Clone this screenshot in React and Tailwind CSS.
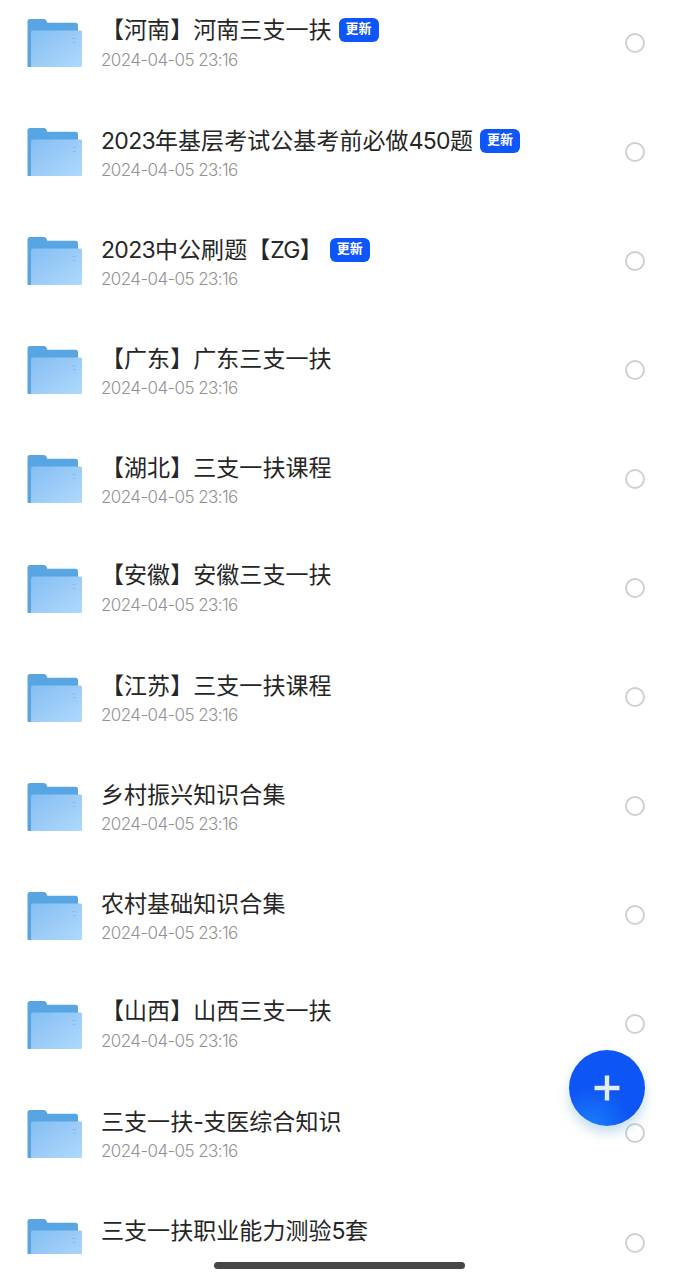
const files = [
  { title: "【河南】河南三支一扶", date: "2024-04-05 23:16", updated: true, raised: true },
  { title: "2023年基层考试公基考前必做450题", date: "2024-04-05 23:16", updated: true },
  { title: "2023中公刷题【ZG】", date: "2024-04-05 23:16", updated: true },
  { title: "【广东】广东三支一扶", date: "2024-04-05 23:16" },
  { title: "【湖北】三支一扶课程", date: "2024-04-05 23:16" },
  { title: "【安徽】安徽三支一扶", date: "2024-04-05 23:16", raised: true },
  { title: "【江苏】三支一扶课程", date: "2024-04-05 23:16" },
  { title: "乡村振兴知识合集", date: "2024-04-05 23:16" },
  { title: "农村基础知识合集", date: "2024-04-05 23:16" },
  { title: "【山西】山西三支一扶", date: "2024-04-05 23:16", raised: true },
  { title: "三支一扶-支医综合知识", date: "2024-04-05 23:16" },
  { title: "三支一扶职业能力测验5套" },
];

const FolderIcon = () => (
  <svg width="56" height="50" viewBox="0 0 56 50" className="shrink-0">
    <defs>
      <linearGradient id="folderFront" x1="0" y1="0" x2="1" y2="1">
        <stop offset="0" stopColor="#84bff3" />
        <stop offset="0.5" stopColor="#9bcbf7" />
        <stop offset="1" stopColor="#addafd" />
      </linearGradient>
    </defs>
    {/* back with the tab */}
    <path d="M0.5 3.5a2.5 2.5 0 0 1 2.500-2.500h14q1.800 0 2.400 1.500l.9 2.300h28.200a2.500 2.500 0 0 1 2.500 2.500V20L5 49H1.500a1 1 0 0 1-1-1z" fill="#57a5e3" />
    {/* front sheet */}
    <path d="M4 14.500a2 2 0 0 1 2-2h47.500a1.500 1.500 0 0 1 1.500 1.500v34a1 1 0 0 1-1 1H4z" fill="url(#folderFront)" />
    <path d="M45 20.500h4M46 24.500h3" stroke="#7cb7ec" strokeWidth="1" opacity="0.7" />
  </svg>
);

// latin letters and digits are set a little tighter than the chinese text
const Title = ({ text }) => (
  <h2 className="whitespace-nowrap text-[23px] leading-[30px] tracking-[0.06px] text-[#262626]">
    {text.split(/([A-Za-z0-9-]+)/).map((part, i) => (
      <span key={i} className={i % 2 ? "tracking-[-0.7px]" : ""}>
        {part}
      </span>
    ))}
  </h2>
);

const FileRow = ({ file }) => (
  <li className="flex h-[109.05px] shrink-0 items-start pl-[27px] pr-[34px]">
    <div className="pt-[29.8px]">
      <FolderIcon />
    </div>

    <div className={file.raised ? "ml-[18px] pt-[26px]" : "ml-[18px] pt-[28px]"}>
      <div className="flex items-center">
        <Title text={file.title} />
        {file.updated && (
          <span className="ml-[7px] flex h-6 w-10 items-center justify-center rounded-md bg-[#0e55fb] pb-0.5 text-[13px] font-bold leading-none text-white">
            更新
          </span>
        )}
      </div>
      {file.date && (
        <p className={file.raised ? "mt-[1.5px] text-[17px] font-light leading-[29px] tracking-[-0.6px] text-[#929292]" : "text-[17px] font-light leading-[29px] tracking-[-0.6px] text-[#929292]"}>
          {file.date}
        </p>
      )}
    </div>

    {/* select */}
    <span className="ml-auto mt-[44.5px] h-5 w-5 rounded-full border-2 border-[#d0d0d0]" />
  </li>
);

const App = () => {
  return (
    <div className="relative h-[1280px] w-[679px] overflow-hidden bg-white font-['Inter','Noto_Sans_CJK_SC',sans-serif]">
      {/* file list */}
      <div className="h-[1254px] overflow-hidden">
        <ul className="-mt-[11.5px] flex flex-col">
          {files.map((file) => (
            <FileRow key={file.title} file={file} />
          ))}
        </ul>
      </div>

      {/* add button */}
      <button className="absolute left-[568.5px] top-[1049.5px] flex h-[76px] w-[76px] items-center justify-center rounded-full bg-[radial-gradient(circle_at_30%_100%,#1a7dfb_0%,#0e55f5_42%)] shadow-[0_7px_12px_rgba(90,160,210,0.35)]">
        <svg width="26" height="26" viewBox="0 0 26 26" stroke="#e3ecfb" strokeWidth="4.4">
          <path d="M13 0.500v25M0.500 13h25" />
        </svg>
      </button>

      {/* home indicator */}
      <div className="mx-auto mt-2 h-[7px] w-[251px] rounded-full bg-[#474747]" />
    </div>
  );
};

export default App;
